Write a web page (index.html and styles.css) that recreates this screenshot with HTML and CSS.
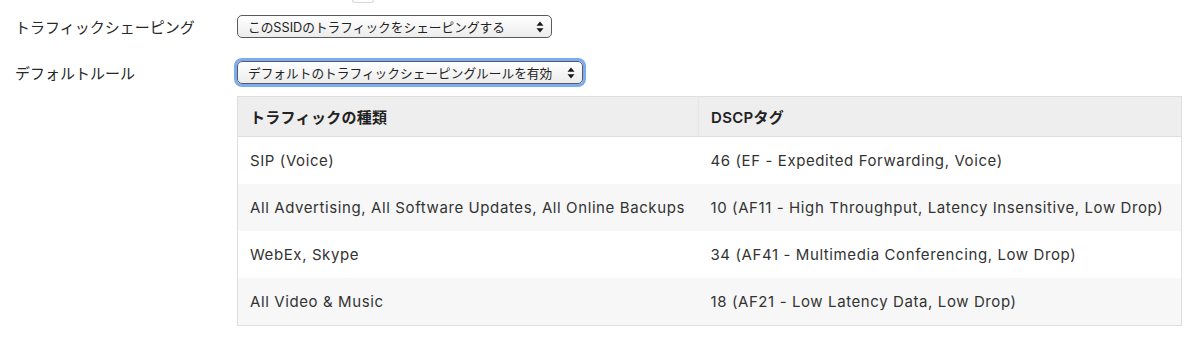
FILE: index.html
```html
<!DOCTYPE html>
<html>
<head>
    <link rel="stylesheet" href="styles.css">
</head>
<body>
    <div id="page">
        <div class="top_strip"><div class="clipped_btn"></div></div>
        <div class="form_row">
            <div class="form_label">トラフィックシェーピング</div>
            <div class="select select_shaping">
                <span>このSSIDのトラフィックをシェーピングする</span>
                <svg class="arrows" width="8" height="12" viewBox="0 0 8 12"><path d="M4 0.5 L7.5 4.8 L0.5 4.8 Z M4 11.5 L7.5 7.2 L0.5 7.2 Z" fill="#1a1a1a"/></svg>
            </div>
        </div>
        <div class="form_row">
            <div class="form_label">デフォルトルール</div>
            <div class="select select_rule focused">
                <span>デフォルトのトラフィックシェーピングルールを有効</span>
                <svg class="arrows" width="8" height="12" viewBox="0 0 8 12"><path d="M4 0.5 L7.5 4.8 L0.5 4.8 Z M4 11.5 L7.5 7.2 L0.5 7.2 Z" fill="#1a1a1a"/></svg>
            </div>
        </div>
        <div class="table_row">
            <table class="rules_table">
                <tr class="head">
                    <th class="col_type">トラフィックの種類</th>
                    <th>DSCPタグ</th>
                </tr>
                <tr>
                    <td>SIP (Voice)</td>
                    <td>46 (EF - Expedited Forwarding, Voice)</td>
                </tr>
                <tr class="alt">
                    <td>All Advertising, All Software Updates, All Online Backups</td>
                    <td>10 (AF11 - High Throughput, Latency Insensitive, Low Drop)</td>
                </tr>
                <tr>
                    <td>WebEx, Skype</td>
                    <td>34 (AF41 - Multimedia Conferencing, Low Drop)</td>
                </tr>
                <tr class="alt">
                    <td>All Video &amp; Music</td>
                    <td>18 (AF21 - Low Latency Data, Low Drop)</td>
                </tr>
            </table>
        </div>
    </div>
</body>
</html>
```

FILE: styles.css
```css
html, body {
    margin: 0;
    padding: 0;
    background-color: white;
}
body {
    font-family: Inter, "Noto Sans CJK JP", sans-serif;
    color: rgb(51,51,51);
}
#page {
    padding: 0 0 0 15px;
}
.top_strip {
    height: 15px;
}
.clipped_btn {
    width: 20px;
    height: 2px;
    margin-left: 337px;
    border: 1px solid rgb(215,215,215);
    border-top: none;
    border-radius: 0 0 4px 4px;
}
.form_row {
    display: flex;
    align-items: center;
    height: 23px;
}
.form_row + .form_row {
    margin-top: 23px;
}
.form_label {
    width: 222px;
    font-size: 15px;
    color: rgb(40,40,40);
}
.select {
    box-sizing: border-box;
    display: flex;
    align-items: center;
    justify-content: space-between;
    height: 23px;
    padding: 0 7px 0 10px;
    border: 1px solid rgb(90,90,90);
    border-radius: 5px;
    background-image: linear-gradient(rgb(255,255,255), rgb(236,236,236));
    font-size: 12.7px;
    color: rgb(34,34,34);
}
.select_shaping {
    width: 315px;
}
.select_rule {
    width: 346px;
}
.focused {
    box-shadow: 0 0 0 3px rgb(122,172,240);
}
.table_row {
    padding: 12px 0 0 222px;
}
.rules_table {
    width: 945px;
    border-collapse: collapse;
    border: 1px solid rgb(222,222,222);
    font-size: 15px;
    letter-spacing: 0.6px;
}
.rules_table th {
    text-align: left;
    font-weight: 600;
    font-size: 15px;
    letter-spacing: 0.3px;
    height: 39px;
    padding: 0 12px;
    background-color: rgb(238,238,238);
    border-bottom: 1px solid rgb(222,222,222);
    color: rgb(34,34,34);
}
.rules_table th.col_type {
    width: 436px;
    border-right: 1px solid rgb(230,230,230);
}
.rules_table td {
    height: 47px;
    padding: 0 12px;
    color: rgb(51,51,51);
}
.rules_table tr.alt td {
    background-color: rgb(247,247,247);
}
```
